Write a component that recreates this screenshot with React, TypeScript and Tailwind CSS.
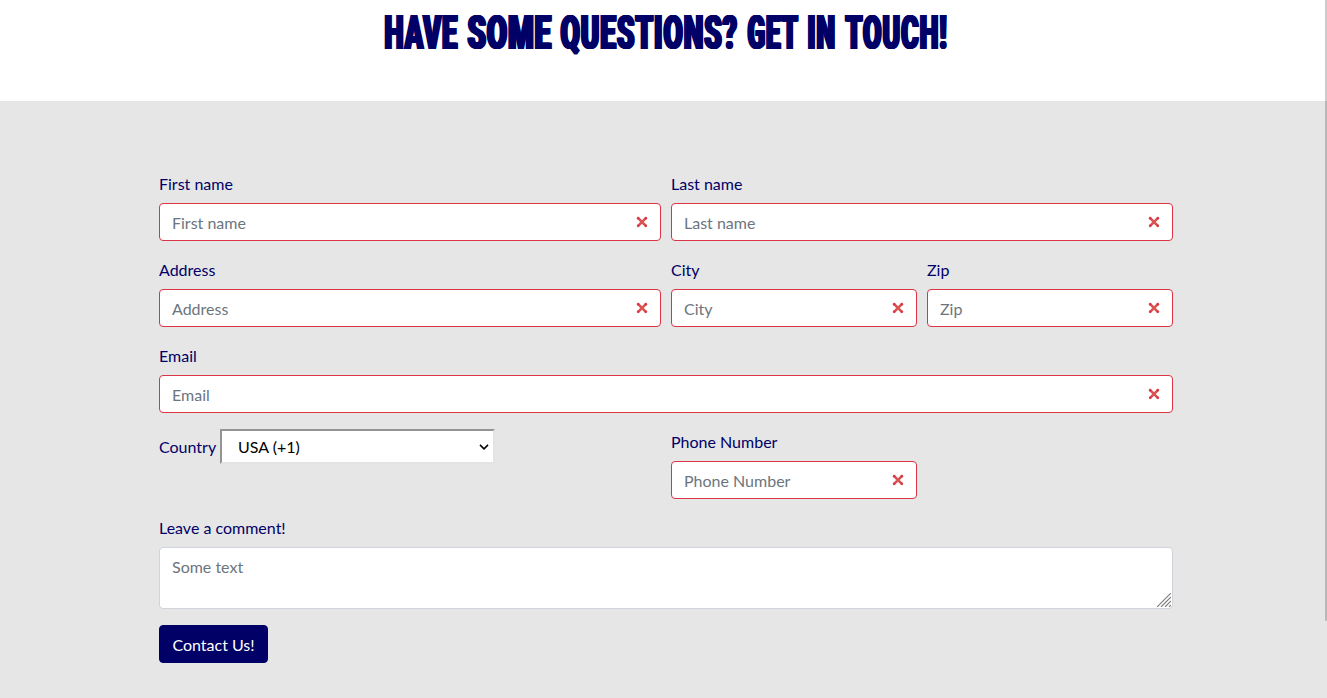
import { useLayoutEffect, useRef, useState } from "react";

const headline = [
  { text: "HAVE", width: 74 },
  { text: "SOME", width: 85 },
  { text: "QUESTIONS?", width: 178 },
  { text: "GET", width: 52 },
  { text: "IN", width: 29 },
  { text: "TOUCH!", width: 103 },
];

/* Condenses a word of the headline to the given width. */
function Word({ text, width }: { text: string; width: number }) {
  const ref = useRef<HTMLSpanElement>(null);
  const [scale, setScale] = useState(0.6);
  useLayoutEffect(() => {
    if (ref.current) setScale(width / ref.current.offsetWidth);
  }, [width]);
  return (
    <span className="block" style={{ width }}>
      <span
        ref={ref}
        className="inline-block origin-left whitespace-nowrap pl-[1px] tracking-[1.8px] [text-shadow:2.2px_0_0_#000066,-2.2px_0_0_#000066,1px_0_0_#000066,-1px_0_0_#000066]"
        style={{ transform: `scaleX(${scale})` }}
      >
        {text}
      </span>
    </span>
  );
}

function InvalidMark() {
  return (
    <svg
      viewBox="-2 -2 7 7"
      fill="#dc3545"
      className="pointer-events-none absolute top-2.5 right-2.5 size-[18px]"
    >
      <path stroke="#d9534f" d="M0 0l3 3m0-3L0 3" />
      <circle r=".5" />
      <circle cx="3" r=".5" />
      <circle cy="3" r=".5" />
      <circle cx="3" cy="3" r=".5" />
    </svg>
  );
}

function Field({ label, className = "" }: { label: string; className?: string }) {
  return (
    <label className={`block ${className}`}>
      <span className="mb-[7px] block pt-px">{label}</span>
      <span className="relative block">
        <input
          type="text"
          placeholder={label}
          className="block h-[38px] w-full rounded border border-[#dc3545] bg-white py-1.5 pr-9 pl-3 text-[#495057] outline-none placeholder:text-[#6c757d]"
        />
        <InvalidMark />
      </span>
    </label>
  );
}

export default function App() {
  return (
    <div className="relative h-[698px] overflow-hidden bg-[#e6e6e6] font-['Lato',sans-serif] text-base text-[#000066]">
      <header className="flex h-[101px] justify-center bg-white pt-1">
        <h1 className="flex h-[58px] gap-[8.5px] pl-[5px] font-['Roboto',sans-serif] text-[49px] leading-[58px] font-black">
          {headline.map((w) => (
            <Word key={w.text} text={w.text} width={w.width} />
          ))}
        </h1>
      </header>

      <form className="ml-[159px] w-[1014px] pt-[70px]" onSubmit={(e) => e.preventDefault()}>
        <div className="grid grid-cols-4 gap-x-2.5 gap-y-4">
          <Field label="First name" className="col-span-2" />
          <Field label="Last name" className="col-span-2" />
          <Field label="Address" className="col-span-2" />
          <Field label="City" />
          <Field label="Zip" />
          <Field label="Email" className="col-span-4" />
          <div className="col-span-2 flex items-start">
            <label htmlFor="country" className="w-[61px] pt-1.5">
              Country
            </label>
            <span className="relative block">
              <select
                id="country"
                className="block h-[35px] w-[275px] appearance-none border-2 border-t-[#949494] border-r-[#e3e3e3] border-b-[#e3e3e3] border-l-[#949494] bg-white pl-4 text-black"
              >
                <option>USA (+1)</option>
              </select>
              <svg
                viewBox="0 0 10 6"
                className="pointer-events-none absolute top-[15px] right-[6px] h-1.5 w-2.5"
                fill="none"
                stroke="#000"
                strokeWidth="1.5"
              >
                <path d="M1 .9l4 4 4-4" />
              </svg>
            </span>
          </div>
          <Field label="Phone Number" />
        </div>

        <label className="mt-4 block">
          <span className="mb-[7px] block pt-px">Leave a comment!</span>
          <span className="relative block">
            <textarea
              rows={2}
              placeholder="Some text"
              className="block h-[62px] w-full resize-none rounded border border-[#ced4da] bg-white px-3 pt-[7px] pb-[5px] text-[#495057] placeholder:text-[#6c757d]"
            />
            <svg
              viewBox="0 0 14 14"
              className="pointer-events-none absolute right-0.5 bottom-0.5 size-[14px]"
              stroke="#808080"
              strokeWidth="1.2"
            >
              <path d="M0 14L14 0M4 14L14 4M8 14l6-6M12 14l2-2" />
            </svg>
          </span>
        </label>
        <button
          type="submit"
          className="mt-4 block h-[38px] w-[109px] rounded border border-[#000066] bg-[#000066] pt-0.5 text-center text-white"
        >
          Contact Us!
        </button>
      </form>

      <div className="absolute top-0 right-0 h-[621px] w-0.5 rounded-b-sm bg-black/20" />
    </div>
  );
}
